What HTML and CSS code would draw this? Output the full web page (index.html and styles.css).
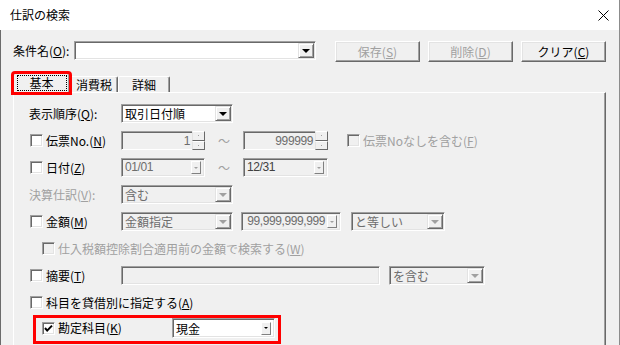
FILE: index.html
```html
<!DOCTYPE html>
<html lang="ja">
<head>
    <meta charset="UTF-8">
    <title>仕訳の検索</title>
    <link rel="stylesheet" href="styles.css">
</head>
<body>
    <div class="window">
        <div class="titlebar">
            <span class="title">仕訳の検索</span>
            <svg class="close" width="11" height="11" viewBox="0 0 11 11">
                <path d="M0.5 0.5 L10.5 10.5 M10.5 0.5 L0.5 10.5" stroke="#000" stroke-width="1" fill="none"/>
            </svg>
        </div>

        <div class="client">
            <div class="toolbar">
                <span class="tb-label">条件名(<u>O</u>):</span>
                <div class="field white combo"><span class="val"></span><span class="drop"></span></div>
                <div class="btns">
                    <span class="btn dis">保存(<u>S</u>)</span>
                    <span class="btn dis">削除(<u>D</u>)</span>
                    <span class="btn">クリア(<u>C</u>)</span>
                </div>
            </div>

            <div class="tabs">
                <span class="tab active"><span class="focus">基本</span></span>
                <span class="tab t2">消費税</span>
                <span class="tab t3">詳細</span>
            </div>

            <div class="panel">
                <div class="row">
                    <span class="lab">表示順序(<u>Q</u>):</span>
                    <div class="field white w112"><span class="val">取引日付順</span><span class="drop"></span></div>
                </div>

                <div class="row">
                    <span class="lab"><span class="cb"></span>伝票No.(<u>N</u>)</span>
                    <div class="spinbox w84"><span class="edit num">1</span><span class="spin"><i></i><i></i></span></div>
                    <span class="tilde">～</span>
                    <div class="spinbox w85"><span class="edit num">999999</span><span class="spin"><i></i><i></i></span></div>
                    <span class="cb dis gap-cb"></span><span class="gray">伝票Noなしを含む(<u>F</u>)</span>
                </div>

                <div class="row">
                    <span class="lab"><span class="cb"></span>日付(<u>Z</u>)</span>
                    <div class="field w84"><span class="val mono">01/01</span><span class="mini"></span></div>
                    <span class="tilde">～</span>
                    <div class="field w85"><span class="val mono dark">12/31</span><span class="mini"></span></div>
                </div>

                <div class="row">
                    <span class="lab gray">決算仕訳(<u>V</u>):</span>
                    <div class="field w112"><span class="val">含む</span><span class="drop dis"></span></div>
                </div>

                <div class="row">
                    <span class="lab"><span class="cb"></span>金額(<u>M</u>)</span>
                    <div class="field w112"><span class="val">金額指定</span><span class="drop dis"></span></div>
                    <div class="field w100 ml8"><span class="val num mono">99,999,999,999</span><span class="mini"></span></div>
                    <div class="field w94 ml10"><span class="val">と等しい</span><span class="drop dis"></span></div>
                </div>

                <div class="row indent">
                    <span class="cb dis"></span><span class="gray">仕入税額控除割合適用前の金額で検索する(<u>W</u>)</span>
                </div>

                <div class="row">
                    <span class="lab"><span class="cb"></span>摘要(<u>T</u>)</span>
                    <div class="field w259"></div>
                    <div class="field w96 ml9"><span class="val">を含む</span><span class="drop dis"></span></div>
                </div>

                <div class="row">
                    <span class="cb"></span><span>科目を貸借別に指定する(<u>A</u>)</span>
                </div>

                <div class="row hl">
                    <span class="lab-k"><span class="cb">
                        <svg width="9" height="9" viewBox="0 0 9 9"><polyline points="1,4 3.2,6.6 8,1.6" fill="none" stroke="#000" stroke-width="2"/></svg>
                    </span>勘定科目(<u>K</u>)</span>
                    <div class="field white w103 tall"><span class="val">現金</span><span class="mini black"></span></div>
                </div>
            </div>
        </div>
    </div>
</body>
</html>
```

FILE: styles.css
```css
* {
    box-sizing: border-box;
}

body {
    margin: 0;
    width: 620px;
    height: 345px;
    overflow: hidden;
    font-family: "Noto Sans CJK JP", sans-serif;
    font-size: 12px;
    line-height: 1;
    color: #000;
    background-color: #f0f0f0;
}

u {
    text-decoration-thickness: 1px;
    text-underline-offset: 1px;
}

.window {
    width: 620px;
    height: 345px;
    display: flex;
    flex-direction: column;
    border-right: 1px solid #8c8c8c;
}

.titlebar {
    height: 30px;
    flex: none;
    background-color: #ffffff;
    display: flex;
    align-items: center;
    justify-content: space-between;
    padding: 0 10px 0 10px;
}

.title {
    font-size: 12px;
}

.client {
    flex: 1;
    display: flex;
    flex-direction: column;
    border-left: 1px solid #6b6b6b;
    padding: 11px 12px 0 12px;
}

/* top row */
.toolbar {
    display: flex;
    align-items: flex-start;
    height: 21px;
}

.tb-label {
    width: 61px;
    height: 20px;
    display: flex;
    align-items: center;
}

.combo {
    width: 242px;
    height: 20px;
}

.btns {
    display: flex;
    gap: 8px;
    margin-left: 19px;
}

.btn {
    width: 85px;
    height: 21px;
    display: flex;
    align-items: center;
    justify-content: center;
    border: 1px solid;
    border-color: #ffffff #696969 #696969 #ffffff;
    box-shadow: inset -1px -1px 0 #a0a0a0, inset 1px 1px 0 #e3e3e3;
}

.btn.dis {
    color: #a0a0a0;
}

/* tabs */
.tabs {
    display: flex;
    align-items: flex-end;
    height: 19px;
    margin-top: 11px;
}

.tab {
    height: 16px;
    display: flex;
    align-items: center;
    justify-content: center;
    border: 1px solid;
    border-bottom: none;
    border-color: #ffffff #696969 transparent #ffffff;
    border-radius: 2px 2px 0 0;
    box-shadow: inset -1px 0 0 #a0a0a0;
    background-color: #f0f0f0;
}

.tab.active {
    width: 57px;
    height: 20px;
    margin-bottom: -1px;
    position: relative;
    z-index: 1;
    outline: 3px solid #ff0000;
    outline-offset: -1px;
}

.tab.t2 {
    width: 48px;
}

.tab.t3 {
    width: 52px;
}

.focus {
    width: 48px;
    height: 14px;
    display: flex;
    align-items: center;
    justify-content: center;
    outline: 1px dotted #000;
    margin-top: -2px;
}

.panel {
    flex: 1;
    width: 593px;
    border-top: 1px solid #ffffff;
    border-left: 1px solid #ffffff;
    border-right: 1px solid #696969;
    box-shadow: inset -1px 0 0 #a0a0a0;
    padding-top: 11px;
}

/* rows */
.row {
    display: flex;
    align-items: center;
    height: 19px;
    margin-bottom: 8px;
    padding-left: 15px;
    white-space: nowrap;
}

.row.indent {
    padding-left: 27px;
}

.lab {
    width: 92px;
    flex: none;
    display: flex;
    align-items: center;
}

.gray {
    color: #a0a0a0;
}

.cb {
    width: 13px;
    height: 13px;
    flex: none;
    margin: 0 3px 0 1px;
    border: 1px solid;
    border-color: #a0a0a0 #ffffff #ffffff #a0a0a0;
    box-shadow: inset 1px 1px 0 #696969, inset -1px -1px 0 #e3e3e3;
    background-color: #ffffff;
    display: flex;
    align-items: center;
    justify-content: center;
}

.cb.dis {
    background-color: #f0f0f0;
}

.gap-cb {
    margin-left: 19px;
}

/* sunken fields */
.field {
    height: 19px;
    flex: none;
    display: flex;
    align-items: center;
    padding: 1px;
    border: 1px solid;
    border-color: #a0a0a0 #ffffff #ffffff #a0a0a0;
    box-shadow: inset 1px 1px 0 #696969, inset -1px -1px 0 #e3e3e3;
    background-color: #f0f0f0;
    color: #6d6d6d;
}

.field.white {
    background-color: #ffffff;
    color: #000;
}

.field.tall {
    height: 20px;
}

.val {
    flex: 1;
    min-width: 0;
    line-height: 15px;
    padding-left: 2px;
}

.num {
    text-align: right;
    padding-right: 2px;
}

.mono {
    font-family: "Liberation Sans", sans-serif;
    letter-spacing: -0.4px;
}

.dark {
    color: #404040;
}

.drop {
    width: 16px;
    height: 100%;
    flex: none;
    display: flex;
    align-items: center;
    justify-content: center;
    border: 1px solid;
    border-color: #e3e3e3 #696969 #696969 #e3e3e3;
    box-shadow: inset 1px 1px 0 #ffffff, inset -1px -1px 0 #a0a0a0;
    background-color: #f0f0f0;
}

.drop::after {
    content: "";
    border-style: solid;
    border-width: 4px 4px 0 4px;
    border-color: #000 transparent transparent transparent;
}

.drop.dis::after {
    border-top-color: #a0a0a0;
}

.mini {
    width: 10px;
    height: 13px;
    flex: none;
    margin-right: 2px;
    display: flex;
    align-items: center;
    justify-content: center;
    border: 1px solid;
    border-color: #ffffff #808080 #808080 #ffffff;
    background-color: #f0f0f0;
}

.mini::after {
    content: "";
    border-style: solid;
    border-width: 2px 2px 0 2px;
    border-color: #a0a0a0 transparent transparent transparent;
}

.mini.black::after {
    border-top-color: #000;
}

/* spin edits */
.spinbox {
    height: 19px;
    flex: none;
    display: flex;
}

.edit {
    flex: 1;
    display: flex;
    align-items: center;
    justify-content: flex-end;
    padding-right: 2px;
    border: 1px solid;
    border-right: none;
    border-color: #a0a0a0 transparent #ffffff #a0a0a0;
    box-shadow: inset 1px 1px 0 #696969;
    color: #6d6d6d;
    font-family: "Liberation Sans", sans-serif;
    letter-spacing: -0.4px;
}

.spin {
    width: 13px;
    display: flex;
    flex-direction: column;
}

.spin i {
    flex: 1;
    display: flex;
    align-items: center;
    justify-content: center;
    border: 1px solid;
    border-color: #ffffff #696969 #696969 #e3e3e3;
    background-color: #f0f0f0;
}

.spin i::after {
    content: "";
    width: 1px;
    height: 1px;
    background-color: #a0a0a0;
}

.tilde {
    width: 38px;
    flex: none;
    text-align: center;
    color: #a0a0a0;
}

.w84 { width: 84px; }
.w85 { width: 85px; }
.w94 { width: 94px; }
.w96 { width: 96px; }
.w100 { width: 100px; }
.w103 { width: 103px; }
.w112 { width: 112px; }
.w259 { width: 259px; }
.ml8 { margin-left: 8px; }
.ml9 { margin-left: 9px; }
.ml10 { margin-left: 10px; }

/* highlighted row */
.row.hl {
    width: 248px;
    height: 29px;
    margin-left: 19px;
    margin-top: -5px;
    padding: 0 3px 0 6px;
    align-items: flex-start;
    border: 3px solid #ff0000;
}

.lab-k {
    width: 130px;
    height: 20px;
    flex: none;
    display: flex;
    align-items: center;
}

.lab-k .cb {
    margin: 0 3px 0 0;
}
```
